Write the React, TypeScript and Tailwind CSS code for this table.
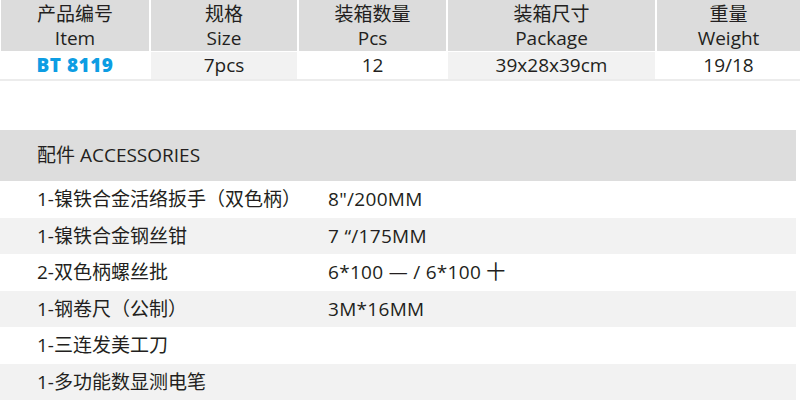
const font = { fontFamily: '"Open Sans", "Noto Sans CJK SC", sans-serif' };

const columns = [
  { zh: '产品编号', en: 'Item', value: 'BT 8119' },
  { zh: '规格', en: 'Size', value: '7pcs' },
  { zh: '装箱数量', en: 'Pcs', value: '12' },
  { zh: '装箱尺寸', en: 'Package', value: '39x28x39cm' },
  { zh: '重量', en: 'Weight', value: '19/18' },
];

const accessories = [
  { name: '1-镍铁合金活络扳手（双色柄）', spec: '8"/200MM' },
  { name: '1-镍铁合金钢丝钳', spec: '7 “/175MM' },
  { name: '2-双色柄螺丝批', spec: '6*100 — / 6*100 十' },
  { name: '1-钢卷尺（公制）', spec: '3M*16MM' },
  { name: '1-三连发美工刀', spec: '' },
  { name: '1-多功能数显测电笔', spec: '' },
];

export default function App() {
  return (
    <div className="w-[800px] h-[402px] bg-white text-[#231f20] overflow-hidden" style={font}>
      {/* spec table */}
      <div className="grid grid-cols-[148px_146px_147px_207px_1fr] gap-x-[2px] pl-[1px] border-b-2 border-[#ececec]">
        {columns.map((c) => (
          <div key={c.zh} className="h-[51px] bg-[#dcdcdc] flex flex-col items-center justify-center pt-[1px]">
            <span className="text-[19px] leading-[24px]">{c.zh}</span>
            <span className="text-[19px] leading-[24px]">{c.en}</span>
          </div>
        ))}
        {columns.map((c, i) => (
          <div
            key={c.en}
            className={`h-[27px] mt-[1px] flex items-center justify-center text-[19px] ${
              i === 1 || i === 3 ? 'bg-[#f2f2f2]' : 'bg-white'
            } ${i === 0 ? 'font-extrabold text-[#0d9de3] tracking-[0.5px]' : ''}`}
          >
            {c.value}
          </div>
        ))}
      </div>

      {/* accessories */}
      <div className="mt-[49px] w-[796px]">
        <div className="h-[51px] bg-[#dddddd] flex items-center pl-[37px] text-[19px]">配件 ACCESSORIES</div>
        {accessories.map((a, i) => (
          <div
            key={a.name}
            className={`h-[36.5px] flex items-center text-[19px] ${i % 2 === 1 ? 'bg-[#f2f2f2]' : 'bg-white'}`}
          >
            <span className="w-[328px] pl-[37px]">{a.name}</span>
            <span className="tracking-[0.3px]">{a.spec}</span>
          </div>
        ))}
      </div>
    </div>
  );
}
